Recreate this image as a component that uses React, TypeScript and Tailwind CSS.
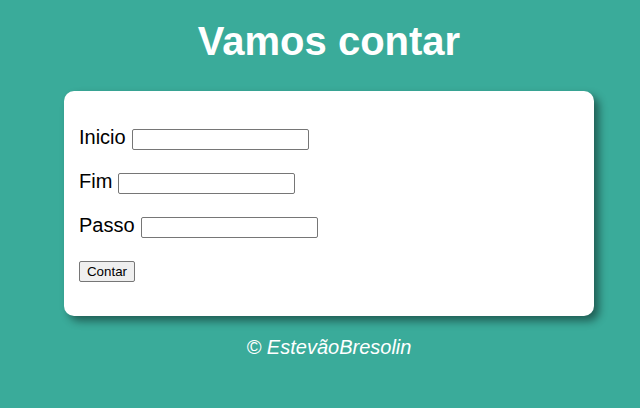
export default function App() {
  const fields = ['Inicio', 'Fim', 'Passo'];

  return (
    <div
      className="min-h-[408px] w-[640px] bg-[#3aab9a] text-black"
      style={{ fontFamily: '"Liberation Sans", Arial, sans-serif' }}
    >
      <div className="w-[658px] pt-[18px]">
        <h1 className="text-center text-[40px] font-bold leading-[46px] text-white">Vamos contar</h1>

        {/* Card */}
        <div className="ml-[64px] mt-[27px] flex h-[225px] w-[530px] flex-col rounded-[10px] bg-white pl-[15px] pt-[38px] shadow-[5px_5px_8px_rgba(0,0,0,0.45)]">
          {fields.map((f) => (
            <div key={f} className="mb-[23px] flex h-[21px] items-baseline text-[20px] leading-[23px]">
              <span className="relative top-[-3px]">{f}</span>
              <input
                type="text"
                className="ml-[6px] h-[21px] w-[177px] self-center rounded-[2px] border border-[#767676] bg-white px-[2px] text-[13px]"
              />
            </div>
          ))}
          <button className="block h-[21px] w-[56px] rounded-[2px] border border-[#767676] bg-[#efefef] text-[13.33px] leading-[19px] text-black">
            Contar
          </button>
        </div>

        <p className="mt-[20px] text-center text-[20px] italic leading-[23px] text-white">© EstevãoBresolin</p>
      </div>
    </div>
  );
}
